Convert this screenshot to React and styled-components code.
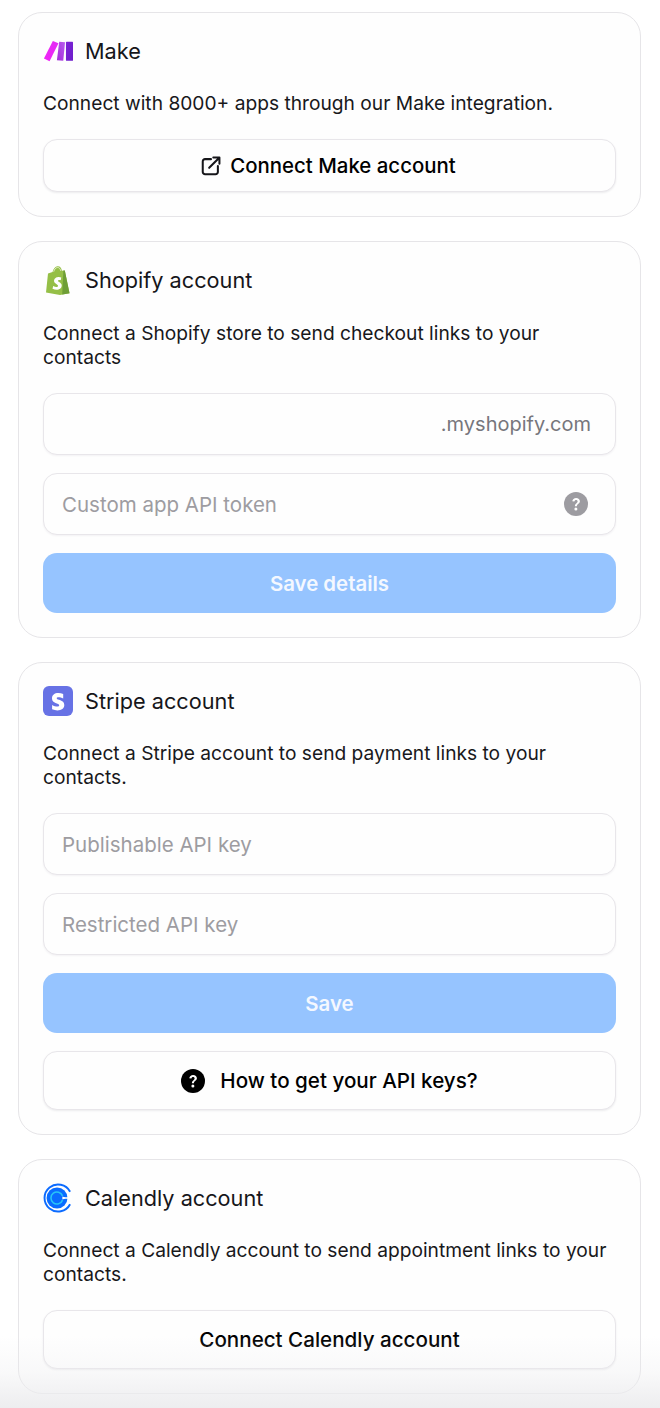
import React from "react";
import styled, { createGlobalStyle } from "styled-components";

const Global = createGlobalStyle`
  html, body { margin: 0; padding: 0; background: #fff; }
  body { font-family: Inter, "Liberation Sans", sans-serif; color: #111114; -webkit-font-smoothing: antialiased; }
  * { box-sizing: border-box; }
`;

const Page = styled.div`
  position: relative;
  width: 660px;
  height: 1408px;
  overflow: hidden;
  padding: 12px 19px 0 18px;
  display: flex;
  flex-direction: column;
  gap: 24px;
`;

const Fade = styled.div`
  position: absolute;
  left: 0;
  right: 0;
  bottom: 0;
  height: 72px;
  pointer-events: none;
  background: linear-gradient(to bottom, rgba(236,236,238,0), rgba(236,236,238,0.3) 50%, rgba(236,236,238,0.95));
`;

const Card = styled.section`
  border: 1px solid #e6e5e8;
  border-radius: 24px;
  background: #fefefe;
  padding: 24px;
`;

const Header = styled.header`
  display: flex;
  align-items: center;
  gap: 12px;
  height: 28px;
  margin-bottom: ${(p) => p.$below || 26}px;
`;

const LogoBox = styled.span`
  width: 30px;
  height: 30px;
  display: flex;
  align-items: center;
  justify-content: center;
  flex: none;
`;

const Title = styled.h2`
  margin: 0;
  font-size: 21.7px;
  font-weight: 400;
  line-height: 28px;
  color: #16161a;
`;

const Desc = styled.p`
  margin: 0 0 24px;
  font-size: 19.2px;
  line-height: 24px;
  color: #18181b;
`;

const Stack = styled.div`
  display: flex;
  flex-direction: column;
  gap: 18px;
`;

const Field = styled.div`
  height: 62px;
  border: 1px solid #e8e6ea;
  border-radius: 14px;
  background: #fefefe;
  box-shadow: 0 1px 2px rgba(30, 20, 50, 0.05);
  padding: 0 24px 0 18px;
  display: flex;
  align-items: center;
  justify-content: ${(p) => (p.$end ? "flex-end" : "space-between")};
  font-size: 20.5px;
  color: #9d9ca1;
`;

const Suffix = styled.span`
  font-size: 20px;
  color: #77767c;
`;

const HelpDot = styled.span`
  display: flex;
  margin-right: ${(p) => p.$nudge || 0}px;
  color: ${(p) => p.$color};
`;

const OutlineButton = styled.button`
  height: ${(p) => p.$h}px;
  width: 100%;
  border: 1px solid #e8e6ea;
  border-radius: 14px;
  background: #fefefe;
  box-shadow: 0 1px 2px rgba(30, 20, 50, 0.08);
  display: flex;
  align-items: center;
  justify-content: center;
  gap: ${(p) => p.$gap || 8}px;
  font: 500 ${(p) => p.$size || 20.6}px Inter, "Liberation Sans", sans-serif;
  color: #000;
  padding: 0 ${(p) => p.$right || 0}px 0 0;
`;

const SolidButton = styled.button`
  height: 60px;
  width: 100%;
  border: 0;
  border-radius: 14px;
  background: #96c4ff;
  font: 600 20.4px Inter, "Liberation Sans", sans-serif;
  color: #f4f8ff;
`;

const MakeLogo = () => (
  <svg width="32" height="24" viewBox="0 0 32 24">
    <defs>
      <linearGradient id="mk1" x1="0" y1="1" x2="1" y2="0"><stop offset="0" stopColor="#f024f6" /><stop offset="1" stopColor="#e22cf5" /></linearGradient>
      <linearGradient id="mk2" x1="0" y1="1" x2="1" y2="0"><stop offset="0" stopColor="#a42bd8" /><stop offset="1" stopColor="#b85cf0" /></linearGradient>
      <linearGradient id="mk3" x1="0" y1="0" x2="1" y2="1"><stop offset="0" stopColor="#7c22d8" /><stop offset="1" stopColor="#6d1dc9" /></linearGradient>
    </defs>
    <path d="M10.500 1.300 16.500 3.700 7 23 1 20Z" fill="url(#mk1)" />
    <path d="M17.300 2 23.500 2.600 21.600 22.500 14.800 21.800Z" fill="url(#mk2)" />
    <rect x="24.500" y="2.200" width="7.500" height="20.300" rx="0.6" fill="url(#mk3)" />
  </svg>
);

const ShopifyLogo = () => (
  <svg width="28" height="30" viewBox="0 0 26 30">
    <path d="M3 8.400 7.500 7C8.400 3.600 10.400 1.500 12.400 1.300 15 1 16.500 3.300 16.900 5.700L19.800 5.400 24.500 28.300 15 30 1 27.500Z" fill="#95bf47" />
    <path d="M19.800 5.400 24.500 28.300 17.200 29.600 18.400 5.600Z" fill="#6f9e37" />
    <path d="M8.700 6.700C9.300 4.300 10.800 2.700 12.300 2.500 14.400 2.300 15.400 4.200 15.700 5.800" fill="none" stroke="#e6f0d0" strokeWidth="0.9" />
    <path d="M16.300 12.600C15.300 12.200 14.300 12 13.300 12.100 9.800 12.400 8.700 15 9.200 16.700 9.800 18.900 13.200 19.200 13 20.900 12.800 22.200 10.700 22.300 8.200 21L7.500 23.800C9.700 24.900 11.800 25.100 13.500 24.600 15.900 23.800 17 21.800 16.700 20 16.200 17.400 12.900 17.100 13 15.800 13.100 15 14.500 14.800 15.700 15.300Z" fill="#fff" />
  </svg>
);

const StripeLogo = () => (
  <svg width="30" height="30" viewBox="0 0 30 30">
    <rect width="30" height="30" rx="6" fill="#6772e5" />
    <path d="M13.700 12.300C13.700 11.500 14.400 11.200 15.400 11.200 16.900 11.200 18.700 11.700 20.200 12.400V8C18.600 7.400 17 7.100 15.400 7.100 11.500 7.100 9 9.100 9 12.500 9 17.800 16.200 17 16.200 19.300 16.200 20.200 15.500 20.500 14.400 20.500 12.800 20.500 10.700 19.800 9.100 18.900V23.300C10.900 24.100 12.700 24.400 14.400 24.400 18.500 24.400 21.300 22.400 21.300 19 21.200 13.300 13.700 14.400 13.700 12.300Z" fill="#fff" />
  </svg>
);

const CalendlyLogo = () => (
  <svg width="31" height="30" viewBox="0 0 31 30" fill="none">
    <path d="M28 8.500A14 14 0 1 0 28 21.500" stroke="#0b6bff" strokeWidth="2" />
    <circle cx="14.500" cy="15" r="10.800" fill="#0a6cff" />
    <path d="M20.200 12.800A6.200 6.200 0 1 0 20.200 17.200" stroke="#29c4f6" strokeWidth="1.600" />
    <path d="M20 13.400C22.500 14.600 25.500 14.400 30 12.600V17.400C25.500 15.600 22.500 15.400 20 16.600Z" fill="#fff" />
  </svg>
);

const ExternalIcon = () => (
  <svg width="22" height="22" viewBox="0 0 24 24" fill="none" stroke="#16161a" strokeWidth="2.200" strokeLinecap="round" strokeLinejoin="round">
    <path d="M12 4.500H5.500A2.500 2.500 0 0 0 3 7v11.500A2.500 2.500 0 0 0 5.500 21H17a2.500 2.500 0 0 0 2.500-2.500V12" />
    <path d="M10 14 21 3M14.500 2.800H21.200V9.500" />
  </svg>
);

const HelpIcon = ({ size }) => (
  <svg width={size} height={size} viewBox="0 0 24 24">
    <circle cx="12" cy="12" r="12" fill="currentColor" />
    <path d="M8.300 9.300C8.500 7.300 10 6 12.100 6 14.300 6 15.900 7.400 15.900 9.300 15.900 11.800 12.900 12 12.900 14.300H10.900C10.900 11.200 13.600 11 13.600 9.400 13.600 8.600 13 8 12.100 8 11.100 8 10.500 8.600 10.400 9.500Z" fill="#fff" />
    <circle cx="11.900" cy="17" r="1.500" fill="#fff" />
  </svg>
);

export default function App() {
  return (
    <>
      <Global />
      <Page>
        <Card>
          <Header>
            <LogoBox><MakeLogo /></LogoBox>
            <Title>Make</Title>
          </Header>
          <Desc>Connect with 8000+ apps through our Make integration.</Desc>
          <OutlineButton $h={53} $size={20.4} $right={3}>
            <ExternalIcon />
            Connect Make account
          </OutlineButton>
        </Card>

        <Card>
          <Header $below={27}>
            <LogoBox><ShopifyLogo /></LogoBox>
            <Title>Shopify account</Title>
          </Header>
          <Desc>Connect a Shopify store to send checkout links to your contacts</Desc>
          <Stack>
            <Field $end><Suffix>.myshopify.com</Suffix></Field>
            <Field>
              Custom app API token
              <HelpDot $color="#9d9ca1" $nudge={3}><HelpIcon size={24} /></HelpDot>
            </Field>
            <SolidButton>Save details</SolidButton>
          </Stack>
        </Card>

        <Card>
          <Header>
            <LogoBox><StripeLogo /></LogoBox>
            <Title>Stripe account</Title>
          </Header>
          <Desc>Connect a Stripe account to send payment links to your contacts.</Desc>
          <Stack>
            <Field>Publishable API key</Field>
            <Field>Restricted API key</Field>
            <SolidButton>Save</SolidButton>
            <OutlineButton $h={59} $gap={15}>
              <HelpDot $color="#000"><HelpIcon size={24} /></HelpDot>
              How to get your API keys?
            </OutlineButton>
          </Stack>
        </Card>

        <Card>
          <Header>
            <LogoBox><CalendlyLogo /></LogoBox>
            <Title>Calendly account</Title>
          </Header>
          <Desc>Connect a Calendly account to send appointment links to your contacts.</Desc>
          <OutlineButton $h={59}>Connect Calendly account</OutlineButton>
        </Card>
        <Fade />
      </Page>
    </>
  );
}
